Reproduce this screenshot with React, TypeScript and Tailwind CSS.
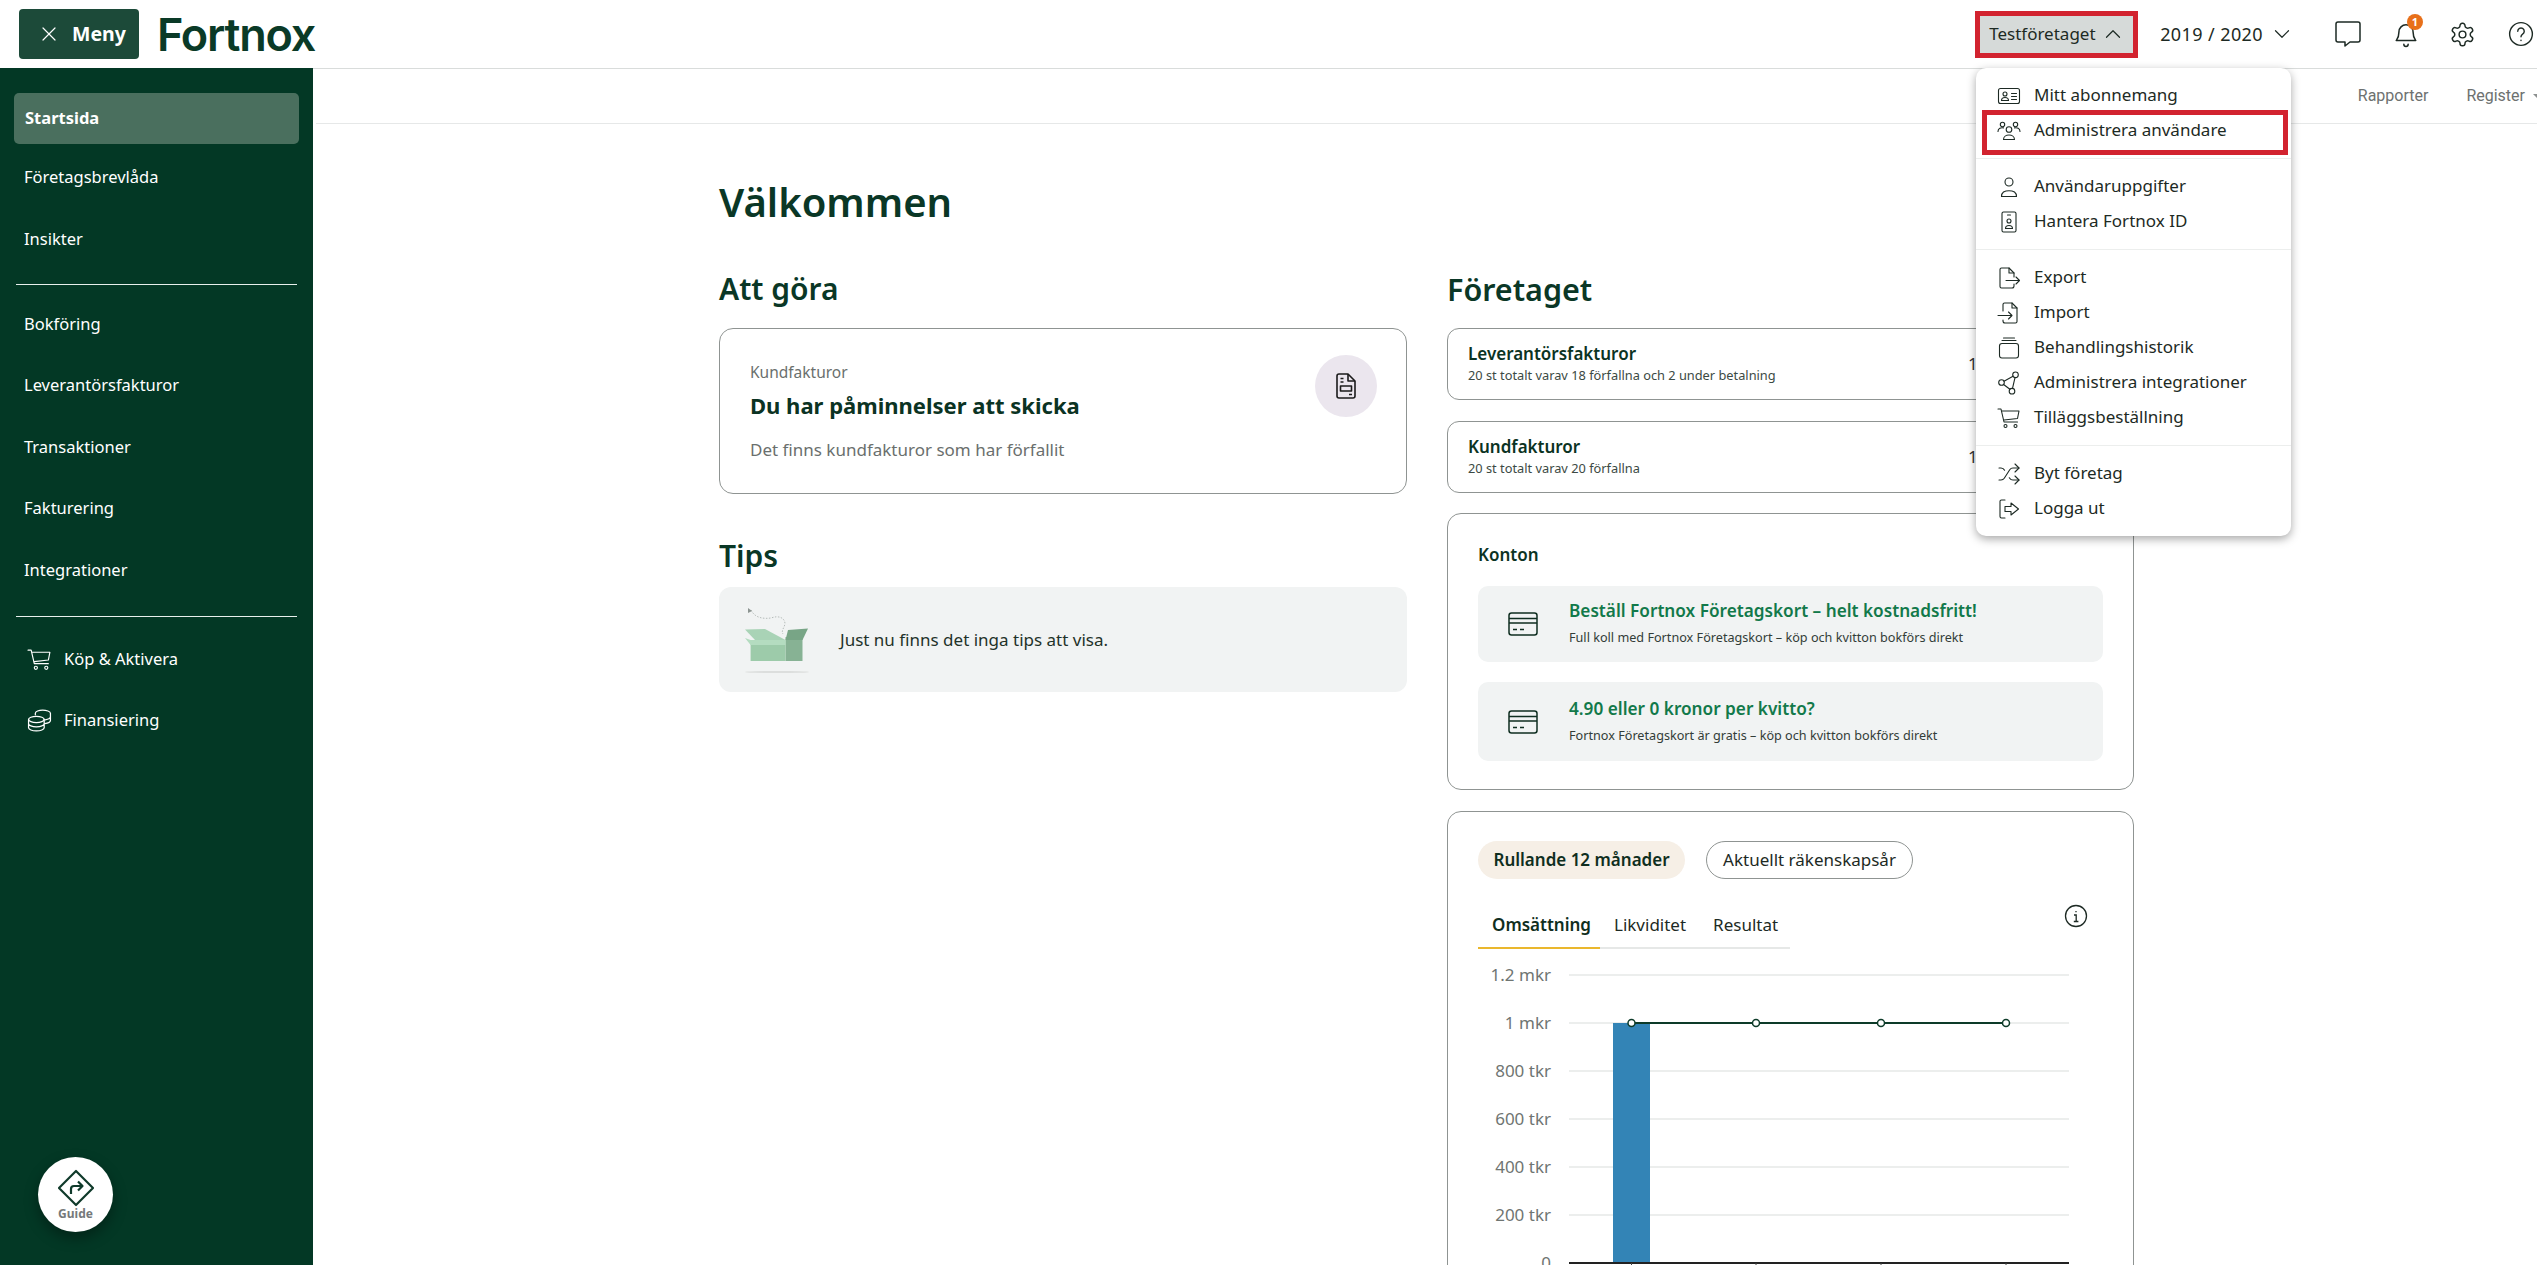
import React from 'react';
import { X, ChevronUp, ChevronDown, Shuffle } from 'lucide-react';

const Ico: React.FC<{ className?: string; sw?: number; children: React.ReactNode }> = ({ className = 'w-6 h-6', sw = 1.1, children }) => (
  <svg viewBox="0 0 24 24" fill="none" stroke="currentColor" strokeWidth={sw} strokeLinecap="round" strokeLinejoin="round" className={className}>
    {children}
  </svg>
);

const CartIcon = ({ className }: { className?: string }) => (
  <Ico className={className}>
    <path d="M1 3h3l3 13h13.5" />
    <path d="M5 5h17l-1.5 7.5L7 14" />
    <circle cx="8.5" cy="20" r="1.5" />
    <circle cx="18.5" cy="20" r="1.5" />
  </Ico>
);

const menuGroups = [
  [
    {
      label: 'Mitt abonnemang',
      icon: (
        <>
          <rect x="1.5" y="4.5" width="21" height="15" rx="2" />
          <circle cx="8" cy="10" r="2" />
          <path d="M4.5 16.5c0-4 7-4 7 0z" />
          <path d="M14.5 9.5h5M14.5 12.5h5M14.5 15.5h5" />
        </>
      ),
    },
    {
      label: 'Administrera användare',
      boxed: true,
      icon: (
        <>
          <circle cx="12" cy="10.5" r="2.8" />
          <path d="M6.5 20.5c0-6 11-6 11 0z" />
          <circle cx="5.5" cy="5.5" r="2.2" />
          <circle cx="18.5" cy="5.5" r="2.2" />
          <path d="M1 12.5c0-3.2 3-4.2 5.5-3.6M23 12.5c0-3.2-3-4.2-5.5-3.6" />
        </>
      ),
    },
  ],
  [
    {
      label: 'Användaruppgifter',
      icon: (
        <>
          <circle cx="12" cy="7" r="4" />
          <path d="M4.5 21.5c0-1 0-3 2-4.5 3-1.6 8-1.6 11 0 2 1.5 2 3.5 2 4.5z" />
        </>
      ),
    },
    {
      label: 'Hantera Fortnox ID',
      icon: (
        <>
          <rect x="5" y="2" width="14" height="20" rx="1.5" />
          <path d="M10.5 5h3" />
          <circle cx="12" cy="11" r="2" />
          <path d="M8.5 18.5c0-4 7-4 7 0z" />
        </>
      ),
    },
  ],
  [
    {
      label: 'Export',
      icon: (
        <>
          <path d="M17 11V7l-5-5H4.5A1.5 1.5 0 0 0 3 3.5v17A1.5 1.5 0 0 0 4.5 22H15a2 2 0 0 0 2-2v-2" />
          <path d="M12 2v5h5" />
          <path d="M9 14.5h13.5M19 11l3.5 3.5L19 18" />
        </>
      ),
    },
    {
      label: 'Import',
      icon: (
        <>
          <path d="M6 10V3.5A1.5 1.5 0 0 1 7.5 2H15l5 5v13.5a1.5 1.5 0 0 1-1.5 1.5H8a2 2 0 0 1-2-2v-1" />
          <path d="M15 2v5h5" />
          <path d="M1 14.5h14M11.5 11l3.5 3.5L11.5 18" />
        </>
      ),
    },
    {
      label: 'Behandlingshistorik',
      icon: (
        <>
          <rect x="2.5" y="7.5" width="19" height="14.5" rx="2.5" />
          <path d="M5 4.5h14M6.5 2h11" />
        </>
      ),
    },
    {
      label: 'Administrera integrationer',
      icon: (
        <>
          <circle cx="4.5" cy="11.5" r="2.8" />
          <circle cx="18.5" cy="3.8" r="2.8" />
          <circle cx="15" cy="20.2" r="2.8" />
          <path d="M7 10.200l9-5M18 6.600l-2.500 10.800M6.600 13.500l6.300 4.800" />
        </>
      ),
    },
    { label: 'Tilläggsbeställning', cart: true },
  ],
  [
    { label: 'Byt företag', shuffle: true },
    {
      label: 'Logga ut',
      icon: (
        <>
          <path d="M8 3H4.5A1.5 1.5 0 0 0 3 4.5v15A1.5 1.5 0 0 0 4.5 21H8" />
          <path d="M8 9.500h6V6l7.500 6-7.500 6v-3.500H8z" />
        </>
      ),
    },
  ],
];

const sideTop = ['Företagsbrevlåda', 'Insikter'];
const sideMid = ['Bokföring', 'Leverantörsfakturor', 'Transaktioner', 'Fakturering', 'Integrationer'];

const CardIcon = () => (
  <svg viewBox="0 0 30 24" fill="none" stroke="#0f2e20" strokeWidth="1.5" className="w-[30px] h-[24px]">
    <rect x="1" y="1" width="28" height="22" rx="2.5" />
    <path d="M1 6.500h28M1 11h28M5 17.500h4M12 17.500h4" />
  </svg>
);

const ForetagRow: React.FC<{ title: string; sub: string }> = ({ title, sub }) => (
  <div className="flex items-center h-[72px] rounded-[12px] border border-[#8f9492] pl-[20px]">
    <div className="w-[500px]">
      <div className="text-[17px] leading-[22px] font-semibold text-[#0b3323]">{title}</div>
      <div className="text-[12.8px] leading-[20px] text-[#3c4a44]">{sub}</div>
    </div>
    <span className="text-[17px] text-[#333]">1</span>
  </div>
);

const KontoRow: React.FC<{ title: string; sub: string; h: string }> = ({ title, sub, h }) => (
  <div className={`flex items-center rounded-[10px] bg-[#f1f3f3] pl-[30px] ${h}`}>
    <CardIcon />
    <div className="ml-[31px]">
      <div className="text-[17.2px] leading-[26px] font-semibold text-[#12794a]">{title}</div>
      <div className="text-[12.65px] leading-[26px] text-[#333d38]">{sub}</div>
    </div>
  </div>
);

const gridY = [15, 63, 111, 159, 207, 255];
const yLabels = ['1.2 mkr', '1 mkr', '800 tkr', '600 tkr', '400 tkr', '200 tkr', '0'];
const dotX = [153.5, 278, 403, 528];

const Chart = () => (
  <svg width="610" height="320" className="block mt-[11px]">
    {gridY.map((y) => (
      <line key={y} x1="91" x2="591" y1={y} y2={y} stroke="#e6e8e7" strokeWidth="1.5" />
    ))}
    {yLabels.map((l, i) => (
      <text key={l} x="73" y={15 + i * 48 + 6} textAnchor="end" fontSize="17" fill="#6f7572" fontFamily="Noto Sans, sans-serif">
        {l}
      </text>
    ))}
    <rect x="135" y="63" width="37" height="240" fill="#3384b6" />
    <line x1="91" x2="591" y1="303" y2="303" stroke="#222" strokeWidth="2" />
    {dotX.map((x) => (
      <line key={x} x1={x} x2={x} y1="303" y2="309" stroke="#444" />
    ))}
    <line x1="153.5" x2="528" y1="63" y2="63" stroke="#0d3b29" strokeWidth="2" />
    {dotX.map((x) => (
      <circle key={x} cx={x} cy="63" r="3.5" fill="#fff" stroke="#0d3b29" strokeWidth="1.5" />
    ))}
  </svg>
);

const BoxArt = () => (
  <svg viewBox="0 0 64 66" className="w-[64px] h-[66px]">
    <path d="M6 3c4 8 12 9 20 8 8-3 14 0 14 6-1 4-4 7-2 10" fill="none" stroke="#8f9794" strokeWidth="0.6" strokeDasharray="1.5 1.5" />
    <path d="M3 1l4 3-4 2z" fill="#8c9491" />
    <path d="M40.5 30h17v24h-17z" fill="#87b294" />
    <path d="M43 23l20-1.500-5.500 11.500h-17z" fill="#78a586" />
    <path d="M0 22.500l20-.500 20.500 11H10z" fill="#a9d3b6" />
    <path d="M5.600 33h34.900v21H5.600z" fill="#9dcbaa" />
    <path d="M5.600 33h34.900v5H5.600l-5.600-7z" fill="#b4dcc0" />
    <ellipse cx="32" cy="65" rx="32" ry="1" fill="#dcdedd" />
  </svg>
);

export default function App() {
  return (
    <div className="relative h-screen overflow-hidden flex flex-col bg-white font-['Noto_Sans',sans-serif] text-[#1d2a24]">
      {/* Topbar */}
      <header className="h-[68px] shrink-0 flex items-center">
        <button className="ml-[19px] w-[120px] h-[50px] flex items-center rounded-[4px] bg-[#1c4a39] text-white pl-[18px]">
          <X className="w-[24px] h-[24px]" strokeWidth={1.2} />
          <span className="ml-[11px] text-[19.5px] font-bold">Meny</span>
        </button>
        <span className="ml-[18px] font-['Inter',sans-serif] text-[45px] leading-none font-semibold text-[#0a3a27] tracking-[-1.2px]">Fortnox</span>

        <div className="ml-auto flex items-center pr-[3px]">
          <button className="w-[163px] h-[47px] flex items-center border-[5px] border-[#d2232f] bg-[#d6dad9] pl-[9px] text-[17px]">
            <span>Testföretaget</span>
            <ChevronUp className="ml-[4px] w-[26px] h-[26px]" strokeWidth={1.1} />
          </button>
          <span className="ml-[22px] text-[18px] tracking-[0.4px]">2019 / 2020</span>
          <ChevronDown className="ml-[6px] w-[26px] h-[26px]" strokeWidth={1.1} />
          <svg viewBox="0 0 26 26" fill="none" stroke="#1d2a24" strokeWidth="1.5" strokeLinejoin="round" className="ml-[40px] w-[26px] h-[26px]">
            <path d="M3 1h20a2 2 0 0 1 2 2v16a2 2 0 0 1-2 2h-8l-5 4v-4H3a2 2 0 0 1-2-2V3a2 2 0 0 1 2-2z" />
          </svg>
          <div className="relative ml-[32px]">
            <Ico className="w-[26px] h-[28px]" sw={1.4}>
              <path d="M3 18c1.500-2 2.500-3 2.500-8a6.500 6.500 0 0 1 13 0c0 5 1 6 2.500 8z" />
              <path d="M10 21.500a2 2 0 0 0 4 0" />
            </Ico>
            <span className="absolute -top-[6px] right-[-4px] w-[16px] h-[16px] rounded-full bg-[#e8701a] text-white text-[11px] leading-[16px] text-center font-bold">1</span>
          </div>
          <svg viewBox="0 0 24 24" fill="none" stroke="#1d2a24" strokeWidth="1.3" strokeLinejoin="round" className="ml-[30px] w-[27px] h-[27px]">
            <path d="M12.220 2h-.440a2 2 0 0 0-2 2v.180a2 2 0 0 1-1 1.730l-.430.250a2 2 0 0 1-2 0l-.150-.080a2 2 0 0 0-2.730.730l-.220.380a2 2 0 0 0 .730 2.730l.150.100a2 2 0 0 1 1 1.720v.510a2 2 0 0 1-1 1.740l-.150.090a2 2 0 0 0-.730 2.730l.220.380a2 2 0 0 0 2.730.730l.150-.080a2 2 0 0 1 2 0l.430.250a2 2 0 0 1 1 1.730V20a2 2 0 0 0 2 2h.440a2 2 0 0 0 2-2v-.180a2 2 0 0 1 1-1.730l.430-.250a2 2 0 0 1 2 0l.150.080a2 2 0 0 0 2.730-.730l.220-.390a2 2 0 0 0-.730-2.730l-.150-.080a2 2 0 0 1-1-1.740v-.500a2 2 0 0 1 1-1.740l.150-.090a2 2 0 0 0 .730-2.730l-.220-.380a2 2 0 0 0-2.730-.730l-.150.080a2 2 0 0 1-2 0l-.430-.250a2 2 0 0 1-1-1.730V4a2 2 0 0 0-2-2z" />
            <circle cx="12" cy="12" r="3" />
          </svg>
          <svg viewBox="0 0 24 24" fill="none" stroke="#1d2a24" strokeWidth="1.3" strokeLinecap="round" className="ml-[32px] w-[26px] h-[26px]">
            <circle cx="12" cy="12" r="10.5" />
            <path d="M9 9.500a3 3 0 1 1 4.500 2.600c-1 .6-1.500 1.200-1.500 2.400" />
            <path d="M12 17.800v.2" />
          </svg>
        </div>
      </header>

      <div className="flex-1 flex min-h-0">
        {/* Sidomeny */}
        <aside className="w-[313px] shrink-0 flex flex-col bg-[#033825] text-white text-[16.5px]">
          <div className="mt-[25px] mx-[14px] h-[51px] flex items-center rounded-[5px] bg-[#4a6f5e] pl-[11px] font-bold">Startsida</div>
          {sideTop.map((s, i) => (
            <div key={s} className={`pl-[24px] h-[30px] flex items-center ${i === 0 ? 'mt-[18px]' : 'mt-[32px]'}`}>{s}</div>
          ))}
          <div className="mx-[16px] mt-[30px] border-t border-[#e8efec]" />
          {sideMid.map((s, i) => (
            <div key={s} className={`pl-[24px] h-[30px] flex items-center ${i === 0 ? 'mt-[24px]' : 'mt-[31.5px]'}`}>{s}</div>
          ))}
          <div className="mx-[16px] mt-[31px] border-t border-[#e8efec]" />
          <div className="ml-[27px] mt-[27px] h-[30px] flex items-center">
            <CartIcon className="w-[25px] h-[25px]" />
            <span className="ml-[12px]">Köp &amp; Aktivera</span>
          </div>
          <div className="ml-[27px] mt-[31px] h-[30px] flex items-center">
            <Ico className="w-[25px] h-[25px]" sw={1.2}>
              <ellipse cx="9" cy="11" rx="7.5" ry="3" />
              <path d="M1.500 11v8c0 1.700 3.400 3 7.500 3s7.500-1.300 7.500-3v-8M1.500 15c0 1.700 3.400 3 7.500 3s7.500-1.300 7.500-3" />
              <path d="M8 6.500V5c0-1.700 3.400-3 7-3s7.500 1.300 7.500 3v7c0 1.400-2.500 2.600-5.500 2.900M22.500 8.500c0 1.400-2.500 2.500-5 2.800" />
            </Ico>
            <span className="ml-[12px]">Finansiering</span>
          </div>
          <button className="mt-auto mb-[33px] ml-[38px] w-[75px] h-[75px] rounded-full bg-white shadow-[0_6px_14px_rgba(0,0,0,0.35)] flex flex-col items-center justify-center">
            <svg viewBox="0 0 38 38" fill="none" stroke="#0f3a2a" strokeWidth="2.2" strokeLinejoin="round" className="w-[38px] h-[38px]">
              <path d="M19 2l17 17-17 17L2 19z" />
              <path d="M14 25v-5a3 3 0 0 1 3-3h8M21 12.500l4.500 4.500-4.500 4.500" />
            </svg>
            <span className="text-[12px] leading-[13px] font-bold text-[#75797a]">Guide</span>
          </button>
        </aside>

        {/* Innehåll */}
        <main className="flex-1 min-w-0 border-t border-[#d9dcdb]">
          <div className="h-[55px] ml-[3px] border-b border-[#e6e8e8] flex items-center justify-end font-['Roboto',sans-serif] text-[16px] text-[#6d7170]">
            <span>Rapporter</span>
            <span className="ml-[38px]">Register</span>
            <span className="ml-[8px] w-0 h-0 border-x-[5px] border-x-transparent border-t-[5px] border-t-[#8c908f] -mr-[6px]" />
          </div>

          <div className="pl-[406px] pt-[54px]">
            <h1 className="text-[40px] leading-[48px] font-semibold text-[#0a3726]">Välkommen</h1>
            <div className="mt-[45px] grid grid-cols-[688px_687px] gap-x-[40px]">
              <div>
                <h2 className="text-[30px] leading-[36px] font-semibold text-[#0a3726]">Att göra</h2>
                <div className="mt-[21px] h-[166px] rounded-[14px] border border-[#8f9492] flex justify-between pl-[30px] pr-[29px]">
                  <div className="pt-[32px]">
                    <div className="text-[15.5px] leading-[22px] text-[#6a6f6d]">Kundfakturor</div>
                    <div className="mt-[7px] text-[22px] leading-[30px] font-bold text-[#0b3323]">Du har påminnelser att skicka</div>
                    <div className="mt-[18px] text-[17px] leading-[24px] text-[#6a6f6d]">Det finns kundfakturor som har förfallit</div>
                  </div>
                  <div className="mt-[26px] w-[62px] h-[62px] rounded-full bg-[#ebe6ee] flex items-center justify-center">
                    <svg viewBox="0 0 20 26" fill="none" stroke="#1b1b1b" strokeWidth="1.6" strokeLinejoin="round" className="w-[20px] h-[26px]">
                      <path d="M3 1h9l7 7v15a2 2 0 0 1-2 2H3a2 2 0 0 1-2-2V3a2 2 0 0 1 2-2z" />
                      <path d="M12 1v7h7M4.500 5.500h3M4.500 9h3M13 21.500h3" />
                      <rect x="4.5" y="13" width="11" height="5" />
                    </svg>
                  </div>
                </div>
                <h2 className="mt-[44px] text-[30px] leading-[36px] font-semibold text-[#0a3726]">Tips</h2>
                <div className="mt-[13px] h-[105px] rounded-[12px] bg-[#f1f3f3] flex items-center pl-[26px]">
                  <BoxArt />
                  <span className="ml-[31px] text-[17px] text-[#1f3229]">Just nu finns det inga tips att visa.</span>
                </div>
              </div>

              <div>
                <h2 className="text-[30.5px] leading-[36px] font-semibold text-[#0a3726]">Företaget</h2>
                <div className="mt-[21px] flex flex-col gap-[20.5px]">
                  <ForetagRow title="Leverantörsfakturor" sub="20 st totalt varav 18 förfallna och 2 under betalning" />
                  <ForetagRow title="Kundfakturor" sub="20 st totalt varav 20 förfallna" />
                </div>
                <div className="mt-[20.5px] h-[277px] rounded-[14px] border border-[#8f9492] px-[30px] pt-[27px]">
                  <div className="text-[17px] leading-[28px] font-semibold text-[#0b3323]">Konton</div>
                  <div className="mt-[17px] flex flex-col gap-[20px]">
                    <KontoRow h="h-[76px]" title="Beställ Fortnox Företagskort – helt kostnadsfritt!" sub="Full koll med Fortnox Företagskort – köp och kvitton bokförs direkt" />
                    <KontoRow h="h-[79px]" title="4.90 eller 0 kronor per kvitto?" sub="Fortnox Företagskort är gratis – köp och kvitton bokförs direkt" />
                  </div>
                </div>
                <div className="mt-[21px] h-[520px] rounded-[14px] border border-[#8f9492] px-[30px] pt-[29px]">
                  <div className="flex items-center gap-[21px] h-[38px] text-[17px]">
                    <span className="h-full w-[207px] rounded-full bg-[#f6efe6] flex items-center justify-center font-semibold text-[#0f2e20]">Rullande 12 månader</span>
                    <span className="h-full w-[207px] rounded-full border border-[#8f9492] flex items-center justify-center">Aktuellt räkenskapsår</span>
                  </div>
                  <div className="mt-[25px] flex justify-between pr-[15px]">
                    <div className="w-[312px] h-[45px] border-b-2 border-[#e6e8e7] flex text-[17px]">
                      <div className="w-[122px] h-[45px] border-b-2 border-[#eab72d] pl-[14px] pt-[8px] font-semibold text-[#0f2e20]">Omsättning</div>
                      <div className="ml-[14px] pt-[8px]">Likviditet</div>
                      <div className="ml-[27px] pt-[8px]">Resultat</div>
                    </div>
                    <svg viewBox="0 0 24 24" fill="none" stroke="#1d2a24" strokeWidth="1.3" className="w-[24px] h-[24px]">
                      <circle cx="12" cy="12" r="10.5" />
                      <path d="M10 11h2.200v6.500M9.800 17.500h4.600M12 7v1.200" />
                    </svg>
                  </div>
                  <Chart />
                </div>
              </div>
            </div>
          </div>
        </main>
      </div>

      {/* Företagsmeny */}
      <div className="absolute right-[246px] top-[68px] w-[315px] rounded-[10px] bg-white shadow-[0_3px_10px_rgba(0,0,0,0.35)] text-[17px] text-[#1d2a24]">
        {menuGroups.map((group, gi) => (
          <div key={gi} className={`py-[10px] ${gi > 0 ? 'border-t border-[#eceeed]' : ''}`}>
            {group.map((item: any) => (
              <div key={item.label} className="relative h-[35px] flex items-center pl-[21px]">
                {item.cart ? (
                  <CartIcon className="w-[24px] h-[24px] text-[#1d2a24]" />
                ) : item.shuffle ? (
                  <Shuffle className="w-[24px] h-[24px]" strokeWidth={1.1} />
                ) : (
                  <Ico className="w-[24px] h-[24px]">{item.icon}</Ico>
                )}
                <span className="ml-[13px] -translate-y-[1px]">{item.label}</span>
                {item.boxed && <div className="absolute left-[6px] right-[3px] -top-[3.5px] -bottom-[6.5px] border-[5px] border-[#d2232f]" />}
              </div>
            ))}
          </div>
        ))}
      </div>
    </div>
  );
}
